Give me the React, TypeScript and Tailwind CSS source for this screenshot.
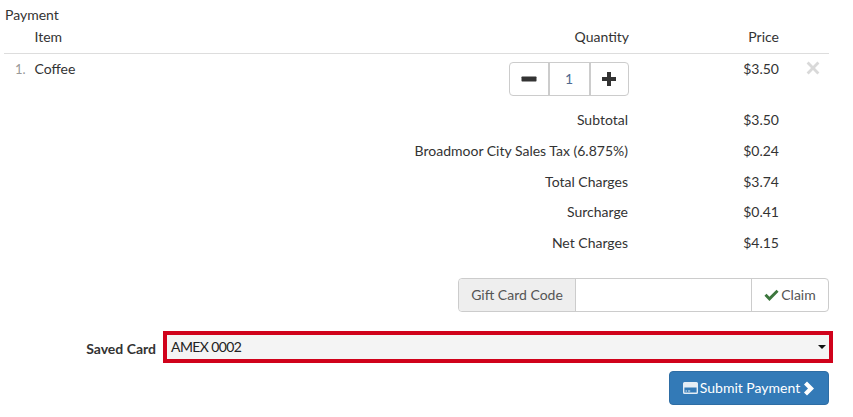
import React from "react";

function CardIcon({ className }: { className?: string }) {
  return (
    <svg viewBox="0 0 15 12" className={className} fill="currentColor">
      <path fillRule="evenodd" d="M1.5 0h12A1.5 1.5 0 0 1 15 1.5v9a1.5 1.5 0 0 1-1.5 1.5h-12A1.5 1.5 0 0 1 0 10.5v-9A1.5 1.5 0 0 1 1.5 0zM1.4 5.6v4.7c0 .2.1.3.3.3h11.6c.2 0 .3-.1.3-.3V5.6zM2.5 8.6h1.6v1H2.5zM5 8.6h2.2v1H5z" />
    </svg>
  );
}

function Summary({ label, value, h }: { label: string; value: string; h: string }) {
  return (
    <div className={`flex items-center justify-end pr-[50px] ${h}`}>
      <span>{label}</span>
      <span className="w-[151px] text-right">{value}</span>
    </div>
  );
}

export default function App() {
  return (
    <div className="w-[853px] h-[417px] bg-white overflow-hidden font-['Lato',sans-serif] text-[14px] leading-[20px] text-[#333] pl-1 pr-6">
      <div className="h-[27px] pt-[5px] pl-px">Payment</div>
      <div className="flex h-[27px] border-b border-[#ddd] pb-[6px] items-center">
        <span className="w-[30.5px]" />
        <span className="flex-1">Item</span>
        <span className="pr-[1px]">Quantity</span>
        <span className="w-[149px] text-right">Price</span>
        <span className="w-[50px]" />
      </div>
      <div className="flex h-[50px] pt-[5px]">
        <span className="w-[30.5px] text-[#999] text-right pr-[9px] text-[13px]">1.</span>
        <span className="flex-1">Coffee</span>
        <div className="flex h-[34px] w-[120px] mt-[3px] rounded border border-[#ccc] text-[#555] box-border">
          <span className="flex-1 flex items-center justify-center border-r-2 border-[#ccc]">
            <svg viewBox="0 0 16 16" className="w-[16px] h-[16px]" fill="#333"><rect x="0.5" y="5.5" width="15" height="5" rx="0.7" /></svg>
          </span>
          <span className="w-[39px] flex items-center justify-center text-[#4f6a90] text-[14px]">1</span>
          <span className="flex-1 flex items-center justify-center border-l-2 border-[#ccc]">
            <svg viewBox="0 0 16 16" className="w-[16px] h-[16px]" fill="#333"><path d="M6 1h4v5h5v4h-5v5H6v-5H1V6h5z" /></svg>
          </span>
        </div>
        <span className="w-[150px] text-right">$3.50</span>
        <span className="w-[50px] flex justify-end pr-[9px] pt-[2px]">
          <svg viewBox="0 0 14 14" className="w-[14px] h-[14px]" fill="#d9d9d9"><path d="M2.6 0.6 7 5l4.4-4.4 2 2L9 7l4.4 4.4-2 2L7 9l-4.4 4.4-2-2L5 7 .6 2.6z" /></svg>
        </span>
      </div>
      <Summary label="Subtotal" value="$3.50" h="h-[31px]" />
      <Summary label="Broadmoor City Sales Tax (6.875%)" value="$0.24" h="h-[31px]" />
      <Summary label="Total Charges" value="$3.74" h="h-[31px]" />
      <Summary label="Surcharge" value="$0.41" h="h-[30px]" />
      <Summary label="Net Charges" value="$4.15" h="h-[31px]" />
      <div className="flex justify-end mt-[20px]">
        <div className="flex h-[34px] w-[371px] rounded border border-[#ccc] text-[#555] box-border">
          <span className="w-[117px] bg-[#eee] border-r border-[#ccc] rounded-l flex items-center justify-center">Gift Card Code</span>
          <span className="flex-1" />
          <span className="w-[77px] border-l border-[#ccc] flex items-center justify-center gap-[2px]">
            <svg viewBox="0 0 16 14" className="w-[15px] h-[13px]" fill="#3c763d"><path d="M5.8 12.8 0.4 7.4l2.2-2.2 3.2 3.2 7.6-7.6 2.2 2.2z" /></svg>
            Claim
          </span>
        </div>
      </div>
      <div className="flex mt-[19px] h-[32px] -mr-1 items-center">
        <span className="w-[152px] text-right font-bold pt-[4px]">Saved Card</span>
        <div className="ml-[7px] flex-1 h-[32px] border-[4px] border-[#d0021b] bg-[#f4f4f4] flex items-center justify-between pl-[4px] pr-[3px] box-border">
          <span className="tracking-[-0.6px] text-[#222]">AMEX 0002</span>
          <svg viewBox="0 0 8 4" className="w-[8px] h-[4px]" fill="#111"><path d="M0 0h8L4 4z" /></svg>
        </div>
      </div>
      <div className="flex justify-end mt-[8px]">
        <div className="w-[160px] h-[34px] rounded bg-[#337ab7] border border-[#2e6da4] text-white flex items-center justify-center gap-[2px]">
          <CardIcon className="w-[15px] h-[12px] text-[#e4edf5]" />
          <span>Submit Payment</span>
          <svg viewBox="0 0 12 14" className="w-[12px] h-[15px] ml-[1px]" fill="white"><path d="M4 0 11 7l-7 7-3-3 4-4-4-4z" /></svg>
        </div>
      </div>
    </div>
  );
}
